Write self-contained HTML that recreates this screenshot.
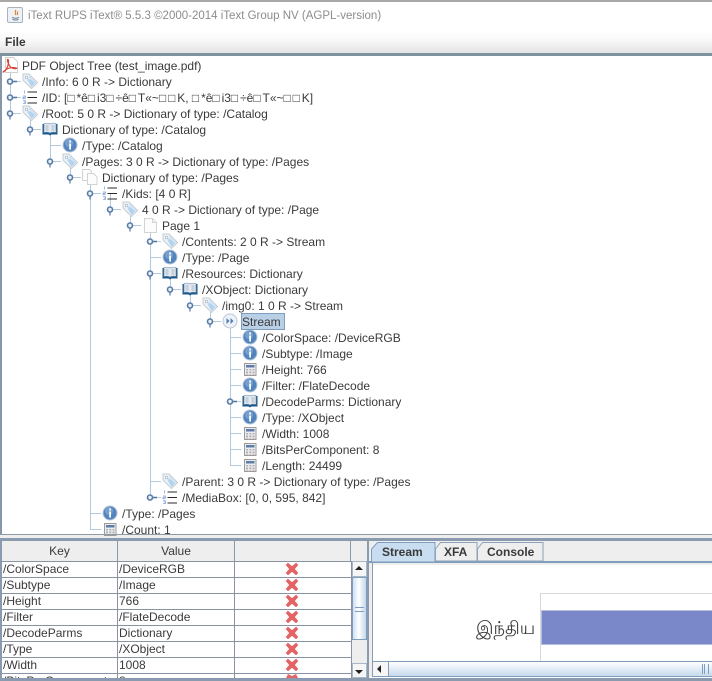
<!DOCTYPE html>
<html><head><meta charset="utf-8"><style>
html,body{margin:0;padding:0;background:#eeeeee}
#w{position:relative;width:712px;height:681px;overflow:hidden;background:#eee;font:12px "Liberation Sans",sans-serif;color:#3a3a3a}
#w div{position:absolute;white-space:pre}
#w b{font-weight:normal;letter-spacing:1.9px}
.t{height:16px;line-height:16px;color:#3a3a3a}
.th{top:542px;height:19px;line-height:19px;text-align:center;background:#eeeeee;color:#3a3a3a;border-right:1px solid #8a9bb0}
.c{height:15px;line-height:14px;border-bottom:1px solid #8a93a3;border-right:1px solid #8a93a3;background:#fff;padding-left:1px;overflow:hidden}
svg{position:absolute;left:0;top:0}
</style></head><body><div id="w">
<div style="left:0;top:0;width:712px;height:2px;background:#a8a8a8"></div>
<div style="left:0;top:2px;width:712px;height:31px;background:#fff"></div>
<div style="left:28px;top:8px;font-size:11.5px;line-height:17px;color:#8c8c8c">iText RUPS iText® 5.5.3 ©2000-2014 iText Group NV (AGPL-version)</div>
<div style="left:0;top:33px;width:712px;height:20px;background:linear-gradient(#fdfdfd,#fafafa 30%,#e4e4e4)"></div>
<div style="left:5px;top:34px;font-weight:bold;line-height:16px;font-size:12px;color:#3a3a3a">File</div>
<div style="left:0;top:53px;width:712px;height:3px;background:#7f929f"></div>
<div style="left:0;top:56px;width:2px;height:479px;background:#8597a8"></div>
<div style="left:2px;top:56px;width:710px;height:478px;background:#fff"></div>

<svg width="712" height="681" viewBox="0 0 712 681" style="z-index:1">
<defs>
<symbol id="tag" viewBox="0 0 16 16"><path d="M1 1h6l8.500 8.500-6 6-8.500-8.500z" fill="#e9f1f9" stroke="#c6ccd3"/><path d="M6.500 5.500l7.500 4-4.500 4.500-4-7z" fill="#b3d3ef"/><path d="M8 3l6.500 6.500-1 1.500-7-7z" fill="#cfe3f5"/><circle cx="4.500" cy="4.500" r="1.300" fill="#fff" stroke="#aab2bb" stroke-width=".7"/></symbol>
<symbol id="list" viewBox="0 0 16 16"><path d="M2.500 1.500v3M1 7h2.500v1.300h-2.500v1.400h2.500M1 11.800h2.500v1.300h-1.500h1.500v1.400h-2.500" fill="none" stroke="#86a3d6" stroke-width=".8"/><path d="M5.500 3h9.500M5.500 8.500h9.500M5.500 14h9.500" stroke="#2b2b2b" stroke-width="1"/></symbol>
<symbol id="book" viewBox="0 0 16 16"><path d="M.5 3h15v10.500h-6l-1.500 1-1.500-1h-6z" fill="#1d5a8c"/><path d="M2 2.500c2-.5 4.500-.5 6 .5 1.500-1 4-1 6-.5v9c-2-.5-4.500-.5-6 .5-1.500-1-4-1-6-.5z" fill="#e3eaf1" stroke="#6b8aa6" stroke-width=".6"/><path d="M3.500 5h3M3.500 7h3M3.500 9h3M9.500 5h3M9.500 7h3M9.500 9h3" stroke="#a9b5c0"/></symbol>
<symbol id="info" viewBox="0 0 16 16"><circle cx="8" cy="8" r="7" fill="#5484bd" stroke="#b4c7dd"/><circle cx="7" cy="6" r="4" fill="#86abd4" opacity=".7"/><rect x="7.200" y="3.500" width="1.800" height="2" fill="#fff"/><rect x="7.200" y="6.500" width="1.800" height="6" fill="#fff"/></symbol>
<symbol id="calc" viewBox="0 0 16 16"><rect x="2.500" y="2.500" width="11.500" height="12" fill="#ececec" stroke="#9b9b9b"/><rect x="4" y="4" width="8.500" height="2.500" fill="#5d7ea8"/><path d="M4 8h2v1.500h-2zM7.300 8h2v1.500h-2zM10.500 8h2v1.500h-2zM4 10.500h2v1.500h-2zM7.300 10.500h2v1.500h-2zM10.500 10.500h2v1.500h-2z" fill="#aeb0bc"/><path d="M4 12.600h2v1h-2zM7.300 12.600h2v1h-2z" fill="#aeb0bc"/><path d="M10.500 12.600h2v1h-2z" fill="#d29a8c"/></symbol>
<symbol id="page" viewBox="0 0 16 16"><path d="M2.500 1.500h8l4 4v10h-12z" fill="#fcfcfc" stroke="#d3d3d3"/><path d="M10.500 1.500v4h4" fill="#f0f0f0" stroke="#d3d3d3"/></symbol>
<symbol id="pages" viewBox="0 0 16 16"><path d="M.5.500h7l2 2v9h-9z" fill="#fcfcfc" stroke="#d3d3d3"/><path d="M5.500 4.500h6l3.500 3.500v7.500h-9.500z" fill="#fcfcfc" stroke="#d3d3d3"/></symbol>
<symbol id="stream" viewBox="0 0 16 16"><circle cx="8" cy="8" r="7" fill="#eef2f8" stroke="#bbc6d5"/><path d="M4.500 5l3 3-3 3zM8.500 5l3 3-3 3z" fill="#4f7fb7"/></symbol>
<symbol id="x" viewBox="0 0 14 14"><path d="M1 3l2-2 4 3.500 4-3.500 2 2-3.500 4 3.500 4-2 2-4-3.500-4 3.500-2-2 3.500-4z" fill="#e86464" stroke="#d05656" stroke-width=".5"/></symbol>
<symbol id="pdf" viewBox="0 0 16 16"><path d="M3.500.5h8l4 4v11h-12z" fill="#fff" stroke="#d0d0d0"/><path d="M.8 15.300c3-1 5-5.500 5.700-9 .3-2.500-.2-4.300-1-3.800-.6 1.200 1.500 6.500 3.700 8.200 1.800 1 4.800 1.300 5.600.5-1-.9-5.200-.8-7.800 0-2 .6-4.700 2.500-6.200 4.100z" fill="none" stroke="#d8453c" stroke-width="1.200"/></symbol>
<symbol id="he" viewBox="0 0 12 12"><path d="M5 5.500v6" stroke="#5f7fa8" stroke-width="1.300"/><circle cx="5" cy="5.500" r="2.500" fill="#e8f0f7" stroke="#5a7ba6" stroke-width="1.600"/></symbol>
<symbol id="hc" viewBox="0 0 12 12"><path d="M5 5.500h7" stroke="#5a7ba6" stroke-width="1.600"/><circle cx="5" cy="5.500" r="2.500" fill="#e8f0f7" stroke="#5a7ba6" stroke-width="1.600"/></symbol>
</defs>
<rect x="7.500" y="7.500" width="15" height="15" rx="1.500" fill="#eef2f6" stroke="#a9b3bd"/>
<path d="M12 17.500c2 .8 5 .8 7 0M12.500 19.500c1.500.6 4.500.6 6 0" stroke="#6b7f99" fill="none"/>
<path d="M16 10c-2 2 1 3-1 5M18 11.500c-1.500 1.500.5 2-1 3.500" stroke="#d98a3a" fill="none" stroke-width="1.200"/>
<g stroke="#b5c9dc" fill="none">
<path d="M10.500 73V113.500M30.500 113V129.500M50.500 129V161.500M70.500 161V177.500M90.500 177V529.500M110.500 193V209.500M130.500 209V225.500M150.500 225V497.500M170.500 273V289.500M190.500 289V305.500M210.500 305V321.500M230.500 321V465.500"/>
<path d="M10 81.500h11M10 97.500h11M10 113.500h11M30 129.500h11M50 145.500h11M50 161.500h11M70 177.500h11M90 193.500h11M110 209.500h11M130 225.500h11M150 241.500h11M150 257.500h11M150 273.500h11M170 289.500h11M190 305.500h11M210 321.500h11M230 337.500h11M230 353.500h11M230 369.500h11M230 385.500h11M230 401.500h11M230 417.500h11M230 433.500h11M230 449.500h11M230 465.500h11M150 481.500h11M150 497.500h11M90 513.500h11M90 529.500h11"/>
</g>
<use href="#pdf" x="2" y="57" width="16" height="16"/>
<use href="#tag" x="22" y="73" width="16" height="16"/>
<use href="#list" x="22" y="89" width="16" height="16"/>
<use href="#tag" x="22" y="105" width="16" height="16"/>
<use href="#book" x="42" y="121" width="16" height="16"/>
<use href="#info" x="62" y="137" width="16" height="16"/>
<use href="#tag" x="62" y="153" width="16" height="16"/>
<use href="#pages" x="82" y="169" width="16" height="16"/>
<use href="#list" x="102" y="185" width="16" height="16"/>
<use href="#tag" x="122" y="201" width="16" height="16"/>
<use href="#page" x="142" y="217" width="16" height="16"/>
<use href="#tag" x="162" y="233" width="16" height="16"/>
<use href="#info" x="162" y="249" width="16" height="16"/>
<use href="#book" x="162" y="265" width="16" height="16"/>
<use href="#book" x="182" y="281" width="16" height="16"/>
<use href="#tag" x="202" y="297" width="16" height="16"/>
<use href="#stream" x="222" y="313" width="16" height="16"/>
<use href="#info" x="242" y="329" width="16" height="16"/>
<use href="#info" x="242" y="345" width="16" height="16"/>
<use href="#calc" x="242" y="361" width="16" height="16"/>
<use href="#info" x="242" y="377" width="16" height="16"/>
<use href="#book" x="242" y="393" width="16" height="16"/>
<use href="#info" x="242" y="409" width="16" height="16"/>
<use href="#calc" x="242" y="425" width="16" height="16"/>
<use href="#calc" x="242" y="441" width="16" height="16"/>
<use href="#calc" x="242" y="457" width="16" height="16"/>
<use href="#tag" x="162" y="473" width="16" height="16"/>
<use href="#list" x="162" y="489" width="16" height="16"/>
<use href="#info" x="102" y="505" width="16" height="16"/>
<use href="#calc" x="102" y="521" width="16" height="16"/>
<use href="#hc" x="5" y="76" width="12" height="12"/>
<use href="#hc" x="5" y="92" width="12" height="12"/>
<use href="#he" x="5" y="108" width="12" height="12"/>
<use href="#he" x="25" y="124" width="12" height="12"/>
<use href="#he" x="45" y="156" width="12" height="12"/>
<use href="#he" x="65" y="172" width="12" height="12"/>
<use href="#he" x="85" y="188" width="12" height="12"/>
<use href="#he" x="105" y="204" width="12" height="12"/>
<use href="#he" x="125" y="220" width="12" height="12"/>
<use href="#hc" x="145" y="236" width="12" height="12"/>
<use href="#he" x="145" y="268" width="12" height="12"/>
<use href="#he" x="165" y="284" width="12" height="12"/>
<use href="#he" x="185" y="300" width="12" height="12"/>
<use href="#he" x="205" y="316" width="12" height="12"/>
<use href="#hc" x="225" y="396" width="12" height="12"/>
<use href="#hc" x="145" y="492" width="12" height="12"/>
</svg>

<div style="left:241px;top:313px;width:44px;height:17px;background:#b9cfe6;box-sizing:border-box;border:1px solid #7f9dbd;z-index:1"></div>
<div style="z-index:2;left:0;top:0;width:712px;height:535px;overflow:hidden">
<div class="t" style="left:22px;top:58px">PDF Object Tree (test_image.pdf)</div>
<div class="t" style="left:42px;top:74px">/Info: 6 0 R -&gt; Dictionary</div>
<div class="t" style="left:42px;top:90px">/ID: [<b>□</b>*ê<b>□</b>i3<b>□</b>÷ê<b>□</b>T«~<b>□□</b>K, <b>□</b>*ê<b>□</b>i3<b>□</b>÷ê<b>□</b>T«~<b>□□</b>K]</div>
<div class="t" style="left:42px;top:106px">/Root: 5 0 R -&gt; Dictionary of type: /Catalog</div>
<div class="t" style="left:62px;top:122px">Dictionary of type: /Catalog</div>
<div class="t" style="left:82px;top:138px">/Type: /Catalog</div>
<div class="t" style="left:82px;top:154px">/Pages: 3 0 R -&gt; Dictionary of type: /Pages</div>
<div class="t" style="left:102px;top:170px">Dictionary of type: /Pages</div>
<div class="t" style="left:122px;top:186px">/Kids: [4 0 R]</div>
<div class="t" style="left:142px;top:202px">4 0 R -&gt; Dictionary of type: /Page</div>
<div class="t" style="left:162px;top:218px">Page 1</div>
<div class="t" style="left:182px;top:234px">/Contents: 2 0 R -&gt; Stream</div>
<div class="t" style="left:182px;top:250px">/Type: /Page</div>
<div class="t" style="left:182px;top:266px">/Resources: Dictionary</div>
<div class="t" style="left:202px;top:282px">/XObject: Dictionary</div>
<div class="t" style="left:222px;top:298px">/img0: 1 0 R -&gt; Stream</div>
<div class="t" style="left:242px;top:314px">Stream</div>
<div class="t" style="left:262px;top:330px">/ColorSpace: /DeviceRGB</div>
<div class="t" style="left:262px;top:346px">/Subtype: /Image</div>
<div class="t" style="left:262px;top:362px">/Height: 766</div>
<div class="t" style="left:262px;top:378px">/Filter: /FlateDecode</div>
<div class="t" style="left:262px;top:394px">/DecodeParms: Dictionary</div>
<div class="t" style="left:262px;top:410px">/Type: /XObject</div>
<div class="t" style="left:262px;top:426px">/Width: 1008</div>
<div class="t" style="left:262px;top:442px">/BitsPerComponent: 8</div>
<div class="t" style="left:262px;top:458px">/Length: 24499</div>
<div class="t" style="left:182px;top:474px">/Parent: 3 0 R -&gt; Dictionary of type: /Pages</div>
<div class="t" style="left:182px;top:490px">/MediaBox: [0, 0, 595, 842]</div>
<div class="t" style="left:122px;top:506px">/Type: /Pages</div>
<div class="t" style="left:122px;top:522px">/Count: 1</div>
</div>

<div style="left:0;top:534px;width:712px;height:1px;background:#8e9aa5;z-index:3"></div>
<div style="left:0;top:538px;width:712px;height:3px;background:#8a9bb0"></div>
<div style="left:0;top:540px;width:2px;height:141px;background:#8a9bb0"></div>

<div class="th" style="left:2px;width:115px;top:541px;height:20px;line-height:21px">Key</div>
<div class="th" style="left:118px;width:116px;top:541px;height:20px;line-height:21px">Value</div>
<div class="th" style="left:235px;width:115px;top:541px;height:20px"></div>
<div class="th" style="left:351px;width:16px;border-right:0;top:541px;height:20px"></div>
<div style="left:2px;top:561px;width:349px;height:1px;background:#8a93a3"></div>

<div class="c" style="left:2px;top:562px;width:114px">/ColorSpace</div><div class="c" style="left:118px;top:562px;width:115px">/DeviceRGB</div><div class="c" style="left:235px;top:562px;width:115px"></div>
<div class="c" style="left:2px;top:578px;width:114px">/Subtype</div><div class="c" style="left:118px;top:578px;width:115px">/Image</div><div class="c" style="left:235px;top:578px;width:115px"></div>
<div class="c" style="left:2px;top:594px;width:114px">/Height</div><div class="c" style="left:118px;top:594px;width:115px">766</div><div class="c" style="left:235px;top:594px;width:115px"></div>
<div class="c" style="left:2px;top:610px;width:114px">/Filter</div><div class="c" style="left:118px;top:610px;width:115px">/FlateDecode</div><div class="c" style="left:235px;top:610px;width:115px"></div>
<div class="c" style="left:2px;top:626px;width:114px">/DecodeParms</div><div class="c" style="left:118px;top:626px;width:115px">Dictionary</div><div class="c" style="left:235px;top:626px;width:115px"></div>
<div class="c" style="left:2px;top:642px;width:114px">/Type</div><div class="c" style="left:118px;top:642px;width:115px">/XObject</div><div class="c" style="left:235px;top:642px;width:115px"></div>
<div class="c" style="left:2px;top:658px;width:114px">/Width</div><div class="c" style="left:118px;top:658px;width:115px">1008</div><div class="c" style="left:235px;top:658px;width:115px"></div>
<div class="c" style="left:2px;top:674px;width:114px;height:4px;border-bottom:0">/BitsPerComponent</div><div class="c" style="left:118px;top:674px;width:115px;height:4px;border-bottom:0">8</div><div class="c" style="left:235px;top:674px;width:115px;height:4px;border-bottom:0"></div>
<div style="left:2px;top:678px;width:366px;height:3px;background:#8a9bb0"></div>

<div style="left:351px;top:561px;width:16px;height:117px;background:#eee;border-left:1px solid #8a93a3"></div>
<div style="left:352px;top:561px;width:15px;height:16px;background:#f6f6f6;border:1px solid #a9b6c5;box-sizing:border-box"></div>
<div style="left:355px;top:566px;width:0;height:0;border-left:4px solid transparent;border-right:4px solid transparent;border-bottom:4px solid #222"></div>
<div style="left:352px;top:577px;width:15px;height:63px;box-sizing:border-box;border:1px solid #7f9dbd;background:linear-gradient(90deg,#cfe0f1,#fff 45%,#c4d8ec)"></div>
<div style="left:355px;top:607px;width:9px;height:3px;border-top:1px solid #7f9dbd;border-bottom:1px solid #7f9dbd"></div>
<div style="left:352px;top:663px;width:15px;height:15px;background:#f6f6f6;border:1px solid #a9b6c5;box-sizing:border-box"></div>
<div style="left:355px;top:670px;width:0;height:0;border-left:4px solid transparent;border-right:4px solid transparent;border-top:4px solid #222"></div>
<div style="left:367px;top:540px;width:2px;height:141px;background:#8a9bb0"></div>

<div style="left:369px;top:541px;width:343px;height:140px;background:#eee"></div>
<svg width="712" height="681" style="z-index:2">
<path d="M371.500 562v-13l6-6.500h57.500v19.500z" fill="#c9ddf0" stroke="#7f9dbd"/>
<path d="M435.500 561v-12l5-6.500h36.500v18.500z" fill="#eee" stroke="#8ea3b8"/>
<path d="M477.500 561v-12l5-6.500h60.500v18.500z" fill="#eee" stroke="#8ea3b8"/>
</svg>
<div style="left:382px;top:543px;font-weight:bold;line-height:18px;z-index:3;color:#3a3a3a">Stream</div>
<div style="left:444px;top:543px;font-weight:bold;line-height:18px;z-index:3;color:#3a3a3a">XFA</div>
<div style="left:487px;top:543px;font-weight:bold;line-height:18px;z-index:3;color:#3a3a3a">Console</div>
<div style="left:369px;top:561px;width:343px;height:2px;background:#7f9dbd"></div>
<div style="left:369px;top:563px;width:3px;height:118px;background:#eee;border-right:1px solid #8a9bb0"></div>
<div style="left:373px;top:565px;width:339px;height:96px;background:#fff"></div>
<div style="left:540px;top:593px;width:172px;height:68px;background:#fff;border-left:1px solid #d8d8d8;border-top:1px solid #d8d8d8"></div>
<div style="left:541px;top:610px;width:171px;height:35px;background:#7a88c9;border:1px solid #b7bfe0;border-right:0;box-sizing:border-box"></div>
<div style="left:476px;top:616px;font:18px/24px 'Liberation Serif','DejaVu Sans',serif;color:#3a3a3a">இந்திய</div>
<div style="left:373px;top:661px;width:339px;height:16px;background:linear-gradient(#fff,#c6d9ec);border-top:1px solid #7f9dbd;border-bottom:1px solid #7f9dbd;box-sizing:border-box"></div>
<div style="left:373px;top:662px;width:15px;height:14px;background:#f6f6f6;border-right:1px solid #8a9bb0"></div>
<div style="left:377px;top:665px;width:0;height:0;border-top:4px solid transparent;border-bottom:4px solid transparent;border-right:4px solid #222"></div>
<div style="left:702px;top:664px;width:5px;height:10px;border-left:1px solid #7f9dbd;border-right:1px solid #7f9dbd"></div>
<div style="left:704px;top:664px;width:1px;height:10px;background:#7f9dbd"></div>
<div style="left:369px;top:677px;width:343px;height:1px;background:#fff"></div>
<div style="left:369px;top:678px;width:343px;height:3px;background:#8a9bb0"></div>

<svg width="712" height="681" style="z-index:4">
<use href="#x" x="285" y="562" width="14" height="14"/>
<use href="#x" x="285" y="578" width="14" height="14"/>
<use href="#x" x="285" y="594" width="14" height="14"/>
<use href="#x" x="285" y="610" width="14" height="14"/>
<use href="#x" x="285" y="626" width="14" height="14"/>
<use href="#x" x="285" y="642" width="14" height="14"/>
<use href="#x" x="285" y="658" width="14" height="14"/>
<path d="M286 678l2-4 4 2 4-2 2 4z" fill="#e86464"/>
</svg>
</div></body></html>
